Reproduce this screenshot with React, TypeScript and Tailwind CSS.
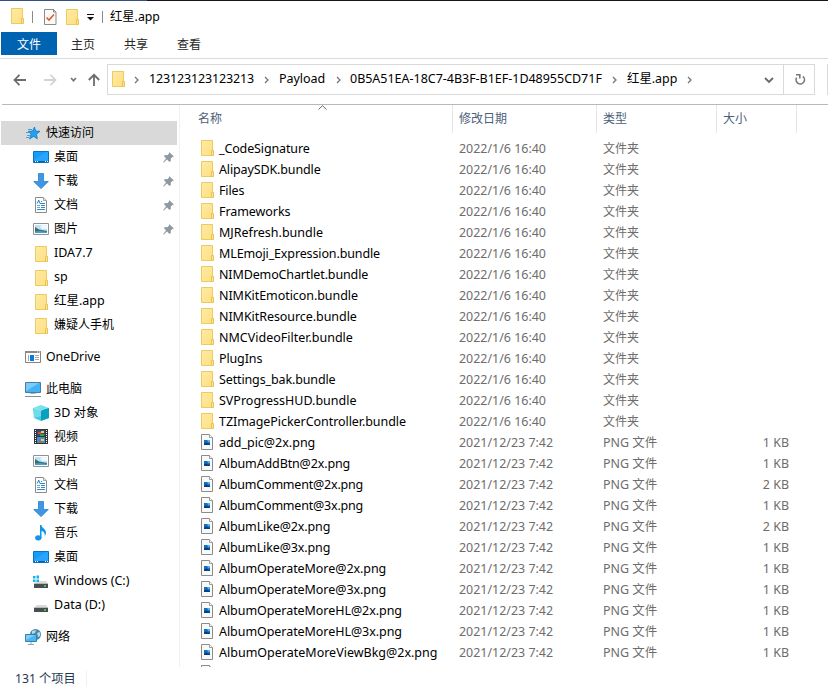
import React from "react";

const FolderIcon = () => (
  <svg width="13" height="16" viewBox="0 0 13 16" className="block shrink-0">
    <defs>
      <linearGradient id="folderFill" x1="0" y1="0" x2="1" y2="1">
        <stop offset="0" stopColor="#ffeaa5" />
        <stop offset="1" stopColor="#ffdf80" />
      </linearGradient>
    </defs>
    <path d="M.5.5H11.5V10.5L10.5 15.5H.5Z" fill="url(#folderFill)" stroke="#eccb60" />
    <path d="M12.5 10.5H10.5V15.5H12.5Z" fill="#ffe69a" stroke="#e8c252" />
  </svg>
);

const PngIcon = () => (
  <svg width="13" height="16" viewBox="0 0 13 16" className="block shrink-0">
    <path d="M.5.5H8.5L11.5 3.5V15.5H.5Z" fill="#f9f9f9" stroke="#8b8b8b" />
    <path d="M8.5.5V3.5H11.5" fill="#fff" stroke="#9b9b9b" />
    <path d="M3 6H9V11H3Z" fill="#0f6fc0" />
    <path d="M6 6H9V7.5L7.5 8.5Z" fill="#5fb2ea" />
    <path d="M3 9.5L5 8.5L9 10V11H3Z" fill="#083f7c" />
  </svg>
);

const StarIcon = () => (
  <svg width="16" height="16" viewBox="0 0 16 16" className="block">
    <path d="M9.5 2L10.6 6L15 6.3L11.5 9.2L12.3 13.8L8.6 11.4L4.5 14L6 9.2L3.5 6.3L7.6 6Z" fill="#22a0f2" stroke="#147bc4" strokeWidth=".8" />
    <path d="M3 4.5H7M1 7.5H4M2 10.5H5M1 12.5H4" stroke="#4d9ed6" />
  </svg>
);

const DesktopIcon = () => (
  <svg width="16" height="16" viewBox="0 0 16 16" className="block">
    <path d="M.5 2.5H15.5V13.5H.5Z" fill="#159bfb" stroke="#0873c0" />
    <path d="M1 11L13 3H15V12H1Z" fill="#28a5ff" />
    <path d="M1 12.5H15" stroke="#0d5c9a" />
    <path d="M2 12.5H3M4 12.5H5M12 12.5H13M14 12.5H15" stroke="#fff" />
  </svg>
);

const DownloadIcon = () => (
  <svg width="16" height="16" viewBox="0 0 16 16" className="block">
    <path d="M5.5.5H10.5V8.5H15.3L8 15.6L.7 8.5H5.5Z" fill="#3d97e5" stroke="#2c7ecb" strokeWidth=".8" />
  </svg>
);

const DocumentIcon = () => (
  <svg width="16" height="16" viewBox="0 0 16 16" className="block">
    <path d="M2.5.5H10.5L13.5 3.5V15.5H2.5Z" fill="#fff" stroke="#8c8c8c" />
    <path d="M10.5.5V3.5H13.5" fill="#e5e5e5" stroke="#a5a5a5" />
    <path d="M4.3 6.5L5.7 3L7 6.5" fill="none" stroke="#2585ca" />
    <path d="M8 4.5H9M7 6.5H12M8 8.5H12M8 10.5H12M4 12.5H12" stroke="#2f8bd0" />
    <path d="M4 8.5H7M4 10.5H7" stroke="#5ea5d8" />
  </svg>
);

const PictureIcon = () => (
  <svg width="16" height="16" viewBox="0 0 16 16" className="block">
    <path d="M.5 2.5H15.5V13.5H.5Z" fill="#fff" stroke="#929292" />
    <path d="M2 4H14V12H2Z" fill="#bce1fb" />
    <path d="M7 5L10 4H14V8H9Z" fill="#edf7fe" />
    <path d="M2 6L6 8.5L14 10V12H2Z" fill="#3b6f65" />
    <path d="M2 10.5L7 10L14 11V12H2Z" fill="#46a0d4" />
  </svg>
);

const OneDriveIcon = () => (
  <svg width="16" height="16" viewBox="0 0 16 16" className="block">
    <path d="M.5 2.5H15.5V13.5H.5Z" fill="#fff" stroke="#858585" />
    <path d="M0 2H16V4H0Z" fill="#8b8b8b" />
    <path d="M12 3H13M14 3H15" stroke="#fff" />
    <path d="M5 6H9V12H5Z" fill="#087bd8" />
    <path d="M3.5 6V12M10 6.5H14M10 8.5H14M10 10.5H14" stroke="#a8a8a8" />
  </svg>
);

const ComputerIcon = () => (
  <svg width="16" height="16" viewBox="0 0 16 16" className="block">
    <path d="M.5 1.5H15.5V11.5H.5Z" fill="#43b3f6" stroke="#477e9f" />
    <path d="M1 2H14L1 10Z" fill="#7bccfc" />
    <path d="M4 12.5H12" stroke="#d4dfe6" />
    <path d="M6 12.5H10" stroke="#9eb2bf" />
    <path d="M0 15.5H16" stroke="#7890a2" />
  </svg>
);

const CubeIcon = () => (
  <svg width="16" height="16" viewBox="0 0 16 16" className="block">
    <path d="M0 3L8 5.5V16L1 13Z" fill="#42cbe0" />
    <path d="M8 5.5L16 3V13L8 16Z" fill="#119db8" />
    <path d="M0 3L8 0L16 3L8 5.5Z" fill="#72e2ec" />
    <path d="M4 2.5L8 5.5V11L1 13V4Z" fill="#8de9ee" opacity=".6" />
    <path d="M10 5L16 3V13L11 14.5Z" fill="#0aa0c4" />
  </svg>
);

const VideoIcon = () => (
  <svg width="16" height="16" viewBox="0 0 16 16" className="block">
    <path d="M1 0H15V15H1Z" fill="#333" />
    <path d="M4 1H12V7H4Z" fill="#314c83" />
    <path d="M4 8H12V14H4Z" fill="#438ed2" />
    <path d="M5 3H8V5H5Z" fill="#da4a30" />
    <path d="M8 2H11V4H8ZM8 10H11V12H8Z" fill="#f3cd2c" />
    <path d="M7 5H11V7H7Z" fill="#3aa04b" />
    <path d="M6 12H9V14H6Z" fill="#a46b4f" />
    <path d="M2.5 1V15M13.5 1V15" stroke="#fff" strokeDasharray="1 1" />
  </svg>
);

const MusicIcon = () => (
  <svg width="16" height="16" viewBox="0 0 16 16" className="block">
    <ellipse cx="5.3" cy="12.8" rx="3.2" ry="2.6" fill="#0b97ef" />
    <path d="M7 0H8.5C8.7 3.4 12.8 3.7 13 7.5C13 9 12.6 10 11.8 11C12 7.8 10.5 6.5 8.5 6V13H7Z" fill="#0b97ef" />
  </svg>
);

const Drive = () => (
  <>
    <path d="M3.5 8H13L15 11V15H1.5V11Z" fill="#dadada" />
    <path d="M1 11H15V15H1Z" fill="#4a4d4e" />
    <path d="M1 10.5H15" stroke="#b9b9b9" />
    <path d="M11 13H13" stroke="#39e45c" strokeWidth="1.5" />
  </>
);

const WindowsDriveIcon = () => (
  <svg width="16" height="16" viewBox="0 0 16 16" className="block">
    <Drive />
    <path d="M0 3H2.5V5.5H0ZM3.5 2.5H6V5.5H3.5ZM0 6.5H2.5V9H0ZM3.5 6.5H6V9H3.5Z" fill="#0eb5ee" />
  </svg>
);

const DriveIcon = () => (
  <svg width="16" height="16" viewBox="0 0 16 16" className="block">
    <Drive />
  </svg>
);

const NetworkIcon = () => (
  <svg width="16" height="16" viewBox="0 0 16 16" className="block">
    <circle cx="10.5" cy="5.5" r="5.5" fill="#4b88a5" />
    <path d="M7 2L11 1L10 4L7 5ZM12 4L15 3V7L13 8Z" fill="#b8dbe8" />
    <path d="M.5 5.5H11.5V12.5H.5Z" fill="#4db5f2" stroke="#3380ac" />
    <path d="M1 6H10L1 11Z" fill="#80cdfb" />
    <path d="M6 13V15M3 15.5H9" stroke="#91a5b1" />
  </svg>
);

const PinIcon = () => (
  <svg width="11" height="11" viewBox="0 0 11 11" className="block">
    <path d="M6 0L11 4.5L9.5 5L7.8 6.6V9L6.5 10L4 7.5L.7 10.5L0 10.3L3 6.5L1 4L2 3L4.5 3.3L6 1.6Z" fill="#8e9aa3" />
  </svg>
);

const Chevron = () => (
  <svg width="5" height="8" viewBox="0 0 5 8" className="block shrink-0">
    <path d="M1 1L4 4L1 7" fill="none" stroke="#757575" strokeWidth="1.3" />
  </svg>
);

type NavEntry = { label: string; icon: () => React.JSX.Element; pinned?: boolean; folder?: boolean };

const quickAccess: NavEntry[] = [
  { label: "桌面", icon: DesktopIcon, pinned: true },
  { label: "下载", icon: DownloadIcon, pinned: true },
  { label: "文档", icon: DocumentIcon, pinned: true },
  { label: "图片", icon: PictureIcon, pinned: true },
  { label: "IDA7.7", icon: FolderIcon, folder: true },
  { label: "sp", icon: FolderIcon, folder: true },
  { label: "红星.app", icon: FolderIcon, folder: true },
  { label: "嫌疑人手机", icon: FolderIcon, folder: true },
];

const thisPc: NavEntry[] = [
  { label: "3D 对象", icon: CubeIcon },
  { label: "视频", icon: VideoIcon },
  { label: "图片", icon: PictureIcon },
  { label: "文档", icon: DocumentIcon },
  { label: "下载", icon: DownloadIcon },
  { label: "音乐", icon: MusicIcon },
  { label: "桌面", icon: DesktopIcon },
  { label: "Windows (C:)", icon: WindowsDriveIcon },
  { label: "Data (D:)", icon: DriveIcon },
];

const folders = [
  "_CodeSignature", "AlipaySDK.bundle", "Files", "Frameworks", "MJRefresh.bundle",
  "MLEmoji_Expression.bundle", "NIMDemoChartlet.bundle", "NIMKitEmoticon.bundle",
  "NIMKitResource.bundle", "NMCVideoFilter.bundle", "PlugIns", "Settings_bak.bundle",
  "SVProgressHUD.bundle", "TZImagePickerController.bundle",
];

const images: [string, number][] = [
  ["add_pic@2x.png", 1], ["AlbumAddBtn@2x.png", 1], ["AlbumComment@2x.png", 2],
  ["AlbumComment@3x.png", 1], ["AlbumLike@2x.png", 2], ["AlbumLike@3x.png", 1],
  ["AlbumOperateMore@2x.png", 1], ["AlbumOperateMore@3x.png", 1],
  ["AlbumOperateMoreHL@2x.png", 1], ["AlbumOperateMoreHL@3x.png", 1],
  ["AlbumOperateMoreViewBkg@2x.png", 1],
];

const tightNames = new Set([
  "_CodeSignature", "MLEmoji_Expression.bundle", "NIMDemoChartlet.bundle", "Settings_bak.bundle",
  "AlbumAddBtn@2x.png", "PlugIns", "AlipaySDK.bundle", "Files",
  "AlbumLike@2x.png", "AlbumLike@3x.png",
]);
const looseNames = new Set([
  "MJRefresh.bundle", "NMCVideoFilter.bundle", "SVProgressHUD.bundle", "add_pic@2x.png",
  "AlbumOperateMoreViewBkg@2x.png",
]);

const nameClass = (name: string) => {
  if (name.startsWith("AlbumComment")) return "ml-[5px] tracking-[-0.2px]";
  if (tightNames.has(name)) return "ml-[5px] tracking-[-0.13px]";
  if (looseNames.has(name)) return "ml-[5px]";
  return "ml-[5px] tracking-[-0.06px]";
};

const NavRoot = ({ label, icon: Icon, selected }: { label: string; icon: () => React.JSX.Element; selected?: boolean }) => (
  <div className={selected ? "flex h-6 items-center bg-[#d9d9d9] pl-6" : "flex h-6 items-center pl-6"}>
    <Icon />
    <span className="ml-[5px]">{label}</span>
  </div>
);

const textSize = (label: string) => (/[A-Za-z]/.test(label) ? "ml-[5px] flex-1" : "ml-[5px] flex-1 text-[12px]");

const NavItem = ({ label, icon: Icon, pinned, folder }: NavEntry) => (
  <div className="flex h-6 items-center pl-8">
    <span className={folder ? "w-4 pt-px pl-0.5" : "w-4"}><Icon /></span>
    <span className={textSize(label)}>{label}</span>
    {pinned && <span className="mr-[3px]"><PinIcon /></span>}
  </div>
);

const FileRow = ({ name, size }: { name: string; size?: number }) => (
  <div className="flex h-[21px] items-center text-[12.45px] text-[#6d6d6d]">
    <div className="flex w-[258px] items-center text-[12.5px] text-black">
      <span className="mb-px">{size ? <PngIcon /> : <FolderIcon />}</span>
      <span className={nameClass(name)}>{name}</span>
    </div>
    <div className="w-36">{size ? "2021/12/23 7:42" : "2022/1/6 16:40"}</div>
    {size ? <div className="w-[120px]">PNG 文件</div> : <div className="w-[120px] text-[12px]">文件夹</div>}
    <div className="w-[66px] text-right">{size ? `${size} KB` : ""}</div>
  </div>
);

export default function App() {
  return (
    <div className="flex h-[690px] w-[828px] flex-col overflow-hidden bg-white font-['Noto_Sans','Noto_Sans_CJK_SC',sans-serif] text-[12.5px] leading-5 whitespace-nowrap text-black">
      <div className="flex h-px shrink-0">
        <div className="w-[147px] bg-[#31537b]" />
        <div className="flex-1 bg-[#15161c]" />
      </div>
      <div className="flex h-[31px] shrink-0 items-center pl-[11px]">
        <span className="mb-px"><FolderIcon /></span>
        <div className="ml-2 h-3 w-px bg-[#8a8a8a]" />
        <svg width="13" height="16" viewBox="0 0 13 16" className="mt-px ml-[11px]">
          <path d="M.5.5H9.5L12 3V15.5H.5Z" fill="#fafafa" stroke="#8b8b8b" />
          <path d="M9.5.5V3H12" fill="none" stroke="#8b8b8b" />
          <path d="M2.5 8.5L5 11L10 5.5" fill="none" stroke="#e35b23" strokeWidth="1.6" />
        </svg>
        <span className="mt-px ml-[9px]"><FolderIcon /></span>
        <svg width="7" height="7" viewBox="0 0 7 7" className="mt-0.5 ml-2">
          <path d="M0 .5H7" stroke="#111" />
          <path d="M0 3H7L3.5 6.5Z" fill="#111" />
        </svg>
        <div className="ml-2 h-3 w-px bg-[#8a8a8a]" />
        <span className="ml-[7px] text-[12.3px]">红星.app</span>
      </div>
      <div className="flex h-[27px] shrink-0 items-start border-b border-[#dadbdc] pl-px text-[12px] text-[#262626]">
        <div className="flex h-[23px] w-14 items-center justify-center bg-[#0063b1] pt-0.5 text-white">文件</div>
        <div className="flex h-[23px] items-center gap-[29px] pt-0.5 pl-3.5">
          <span>主页</span><span>共享</span><span>查看</span>
        </div>
      </div>
      <div className="flex h-[45px] shrink-0 items-start pt-[5px]">
        <svg width="107" height="31" viewBox="0 0 107 31" fill="none" className="shrink-0">
          <path d="M14.5 16H26M19.5 10.8L14.5 16L19.5 21.2" stroke="#6c6c6c" strokeWidth="1.8" />
          <path d="M44 16H55.5M50.5 10.8L55.5 16L50.5 21.2" stroke="#d3d3d3" strokeWidth="1.8" />
          <path d="M71 14L73.5 16.7L76 14" stroke="#777" strokeWidth="1.7" />
          <path d="M94 22V11M88.8 16L94 10.8L99.2 16" stroke="#6c6c6c" strokeWidth="1.8" />
        </svg>
        <div className="flex h-[31px] w-[708px] items-center border border-[#d9d9d9] pl-1">
          <span className="mb-px"><FolderIcon /></span>
          <span className="ml-[9px]"><Chevron /></span>
          <span className="mb-0.5 ml-2.5 w-[115px] tracking-[-0.15px]">123123123123213</span>
          <Chevron />
          <span className="mb-0.5 ml-2.5 w-[57px] tracking-[-0.05px]">Payload</span>
          <Chevron />
          <span className="mb-0.5 ml-[9px] w-[262px] tracking-[-0.02px]">0B5A51EA-18C7-4B3F-B1EF-1D48955CD71F</span>
          <Chevron />
          <span className="mb-0.5 ml-2.5 w-[60px] text-[12.4px]">红星.app</span>
          <Chevron />
          <svg width="10" height="7" viewBox="0 0 10 7" className="mt-px mr-[9px] ml-auto">
            <path d="M1 1L5 5L9 1" fill="none" stroke="#686868" strokeWidth="1.8" />
          </svg>
          <div className="flex h-full w-[31px] items-center justify-center border-l border-[#d9d9d9]">
            <svg width="12" height="13" viewBox="0 0 12 13" fill="none" stroke="#777" strokeWidth="1.6" className="ml-px">
              <path d="M2.6 4.7A4.2 4.2 0 1 0 8.8 3.4" />
              <path d="M2 1.8H5.8V5.6" />
            </svg>
          </div>
        </div>
        <div className="ml-3 h-[31px] w-px bg-[#d9d9d9]" />
      </div>
      <div className="ml-0.5 h-px shrink-0 bg-[#b9b9b9]" />
      <div className="flex h-[562px] shrink-0">
        <nav className="ml-px w-[179px] shrink-0 border-r border-[#f0f0f0] pt-4">
          <div className="w-44 text-[12px]"><NavRoot label="快速访问" icon={StarIcon} selected /></div>
          <div className="w-44 pb-2">{quickAccess.map((item) => <NavItem key={item.label} {...item} />)}</div>
          <div className="pb-2 text-[12.3px]"><NavRoot label="OneDrive" icon={OneDriveIcon} /></div>
          <div className="text-[12px]"><NavRoot label="此电脑" icon={ComputerIcon} /></div>
          <div className="pb-2">{thisPc.map((item) => <NavItem key={item.label} {...item} />)}</div>
          <div className="text-[12px]"><NavRoot label="网络" icon={NetworkIcon} /></div>
        </nav>
        <main className="min-w-0 flex-1 overflow-hidden">
          <div className="relative flex h-[33px] text-[12px] text-[#4c607a]">
            <svg width="9" height="5" viewBox="0 0 9 5" className="absolute top-0 left-[138px]">
              <path d="M.5 4.5L4.5 .7L8.5 4.5" fill="none" stroke="#6d6d6d" />
            </svg>
            <div className="h-7 w-[273px] border-r border-[#e5e5e5] pt-1 pl-[18px]">名称</div>
            <div className="h-7 w-36 border-r border-[#e5e5e5] pt-1 pl-1.5">修改日期</div>
            <div className="h-7 w-[120px] border-r border-[#e5e5e5] pt-1 pl-1.5">类型</div>
            <div className="h-7 w-20 border-r border-[#e5e5e5] pt-1 pl-1.5">大小</div>
          </div>
          <div className="pl-[21px]">
            {folders.map((name) => <FileRow key={name} name={name} />)}
            {images.map(([name, size]) => <FileRow key={name} name={name} size={size} />)}
            <div className="h-1 overflow-hidden pt-0.5"><PngIcon /></div>
          </div>
        </main>
      </div>
      <footer className="flex h-[23px] shrink-0 items-center pl-[15px] text-[12.2px] text-[#23374f]">
        <span>131 个项目</span>
        <div className="ml-2.5 h-4 w-px bg-[#f0f0f0]" />
      </footer>
    </div>
  );
}
